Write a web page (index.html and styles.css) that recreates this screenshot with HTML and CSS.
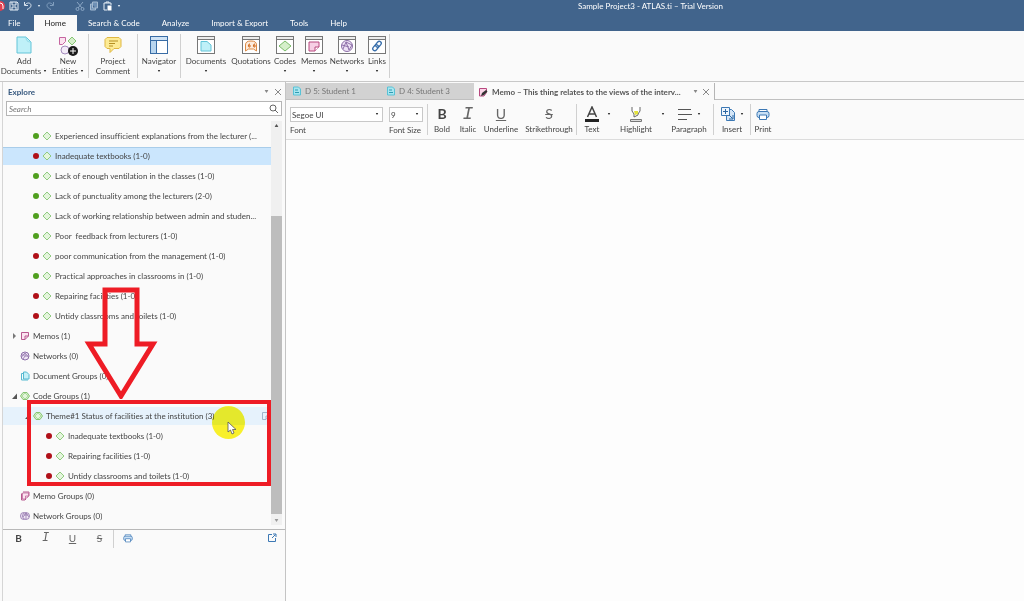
FILE: index.html
```html
<!DOCTYPE html>
<html lang="en">
<head>
    <meta charset="UTF-8">
    <meta name="viewport" content="width=device-width, initial-scale=1.0">
    <title>Sample Project3 - ATLAS.ti – Trial Version</title>
    <link rel="stylesheet" href="styles.css">
</head>
<body>

<!-- Shared icons -->
<svg class="sprite" aria-hidden="true">
    <symbol id="i-caret" viewBox="0 0 4 3"><path d="M0 0h4L2 3z" fill="currentColor"/></symbol>
    <symbol id="i-close" viewBox="0 0 8 8"><path d="M1 1l6 6M7 1L1 7" stroke="#888" fill="none"/></symbol>
    <symbol id="i-code" viewBox="0 0 10 10"><path d="M5 1l4 4-4 4-4-4z" fill="#e4f5dc" stroke="#90cb80"/></symbol>
    <symbol id="i-code-group" viewBox="0 0 10 10"><path d="M3 1.500h4l2.500 3.500L7 8.500H3L.5 5z" fill="#d5efca" stroke="#86c474"/><path d="M5 2l3 3-3 3-3-3z" fill="#e4f5dc" stroke="#90cb80" stroke-width=".6"/></symbol>
    <symbol id="i-memo" viewBox="0 0 10 10"><path d="M1.500 1.500h7v3.500L5 8.500H1.500z" fill="#fbe3f0" stroke="#b8588f"/><path d="M8.500 5H5v3.500" fill="none" stroke="#b8588f"/></symbol>
    <symbol id="i-memo-group" viewBox="0 0 10 10"><path d="M3 1h6v3.500L6.500 7M1.500 2.500v6.500H5l1-1" fill="none" stroke="#b8588f"/><path d="M2.500 2h6v3L5.500 8h-3z" fill="#fbe3f0" stroke="#b8588f" stroke-width=".7"/><path d="M8.500 5h-3v3" fill="none" stroke="#b8588f" stroke-width=".7"/></symbol>
    <symbol id="i-network" viewBox="0 0 10 10"><circle cx="5" cy="5" r="4" fill="#efe6f5" stroke="#8d6fa8"/><path d="M1.500 6L5 2l3.500 4M3 8l2-3 3 0M2 4h4" fill="none" stroke="#8d6fa8" stroke-width=".8"/></symbol>
    <symbol id="i-network-group" viewBox="0 0 10 10"><ellipse cx="3.500" cy="5" rx="3" ry="3.500" fill="#efe6f5" stroke="#8d6fa8" stroke-width=".8"/><circle cx="6" cy="5" r="3.500" fill="#efe6f5" stroke="#8d6fa8" stroke-width=".8"/><path d="M3 6l3-4 3 4M4 4h4M6 2v6" fill="none" stroke="#8d6fa8" stroke-width=".7"/></symbol>
    <symbol id="i-doc-group" viewBox="0 0 10 10"><path d="M3.500 1h3L9 3.500V8H3.500z" fill="#c5f0f7" stroke="#55b9d0"/><path d="M3 2.500H1.500V9H8" fill="none" stroke="#55b9d0"/></symbol>
    <symbol id="i-doc-text" viewBox="0 0 10 10"><path d="M1.500 1h5l2 2v6h-7z" fill="#a8e6f0" stroke="#58c2d6"/><path d="M3 4h3M3 6.500h4" stroke="#2f9bb2"/></symbol>
    <symbol id="i-print" viewBox="0 0 14 14"><path d="M3 5.500V2.500h8v3" fill="#fff" stroke="#3c78b4"/><rect x="1" y="4.500" width="12" height="6" rx="2" fill="#c9e0f5" stroke="#3c78b4"/><path d="M3.500 8h7v4.500h-7z" fill="#fff" stroke="#3c78b4"/></symbol>
    <symbol id="i-window" viewBox="0 0 18 18"><rect x=".5" y=".5" width="17" height="17" fill="#fff" stroke="#777"/><path d="M1 1h16v2H1z" fill="#ececec"/><path d="M1 3.500h16" stroke="#777"/></symbol>
</svg>

<header class="app-header">
    <div class="title-bar">
        <div class="quick-access">
            <svg class="logo" viewBox="0 0 5 10"><circle cx="0" cy="5" r="5" fill="#e04050"/><path d="M-3 5a3 3 0 0 1 6 0v3M0 3a2 2 0 1 0 0 4" fill="none" stroke="#fff"/></svg>
            <svg viewBox="0 0 10 10"><path d="M1 1h7l1 1v7H1zM3 1v3h4V1M3 9V6h4v3" fill="none" stroke="#e6eef6"/></svg>
            <svg viewBox="0 0 10 10"><path d="M1.500 1v3.500H5M2 4c2-3 6-2.500 6 .5 0 2-2 3-4 4" fill="none" stroke="#d8e3ee"/></svg>
            <svg class="caret light" viewBox="0 0 4 3"><use href="#i-caret"/></svg>
            <svg viewBox="0 0 10 10"><path d="M8.500 1v3.500H5M8 4C6 1 2 1.500 2 4.500c0 2 2 3 4 4" fill="none" stroke="#7f9dbd"/></svg>
            <svg class="cut" viewBox="0 0 10 10"><path d="M2 1l5 6M8 1L3 7" stroke="#8aa6c4"/><circle cx="2.500" cy="8" r="1.500" fill="none" stroke="#8aa6c4"/><circle cx="7.500" cy="8" r="1.500" fill="none" stroke="#8aa6c4"/></svg>
            <svg viewBox="0 0 10 10"><path d="M3.500 1h5v6h-5zM3 3H1.500v6h5V7" fill="#6f90b5" stroke="#a4bad1"/></svg>
            <svg viewBox="0 0 10 10"><path d="M4 9H1V2h7v2M3 2V1h3v1" fill="none" stroke="#e6eef6"/><path d="M4.500 4.500h4v5h-4z" fill="#fff"/></svg>
            <svg class="caret light" viewBox="0 0 4 3"><use href="#i-caret"/></svg>
        </div>
        <h1>Sample Project3 - ATLAS.ti – Trial Version</h1>
    </div>
    <nav class="menu">
        <button class="menu-item file">File</button>
        <button class="menu-item active">Home</button>
        <button class="menu-item">Search &amp; Code</button>
        <button class="menu-item">Analyze</button>
        <button class="menu-item">Import &amp; Export</button>
        <button class="menu-item">Tools</button>
        <button class="menu-item">Help</button>
    </nav>
</header>

<div class="ribbon">
    <button class="tool w-48">
        <svg viewBox="0 0 18 18"><path d="M2 1h9l5 5v11H2z" fill="#bff0f8" stroke="#62c4d8"/><path d="M11 1c0 3 1 5 5 5" fill="none" stroke="#8ad8e6"/></svg>
        <span>Add<br>Documents <svg class="caret" viewBox="0 0 4 3"><use href="#i-caret"/></svg></span>
    </button>
    <button class="tool w-40">
        <svg class="wide" viewBox="0 0 20 20"><path d="M1.500 1.500h6v4l-3 3h-3z" fill="#fbe3f0" stroke="#c566a0"/><path d="M14 1l4 4-4 4-4-4z" fill="#d5efca" stroke="#86c474"/><circle cx="7" cy="14" r="4" fill="#f3ecf8" stroke="#a58bbd"/><circle cx="15" cy="15" r="5" fill="#1a1a1a"/><path d="M12 15h6M15 12v6" stroke="#fff"/></svg>
        <span>New<br>Entities <svg class="caret" viewBox="0 0 4 3"><use href="#i-caret"/></svg></span>
    </button>
    <i class="sep"></i>
    <button class="tool w-48">
        <svg viewBox="0 0 18 18"><path d="M3 1.500h12l2 2v7l-2 2h-5L6 16.500v-4H3l-2-2v-7z" fill="#fdeb95" stroke="#dfb742"/><path d="M5 5h9M5 7.500h6M5 10h4" stroke="#b58f22"/></svg>
        <span>Project<br>Comment</span>
    </button>
    <i class="sep"></i>
    <button class="tool w-42">
        <svg viewBox="0 0 18 18"><rect x=".5" y=".5" width="17" height="17" fill="#fff" stroke="#386ca5"/><path d="M1 1h16v3H1z" fill="#cfe3f5"/><path d="M1 5h5v12H1z" fill="#b9d6ef"/><path d="M0 4.500h18M6.500 5v13" stroke="#386ca5"/></svg>
        <span>Navigator</span>
        <svg class="caret" viewBox="0 0 4 3"><use href="#i-caret"/></svg>
    </button>
    <i class="sep"></i>
    <button class="tool w-50">
        <svg viewBox="0 0 18 18"><use href="#i-window"/><path d="M4 5.500h6l4 3.500v6H4z" fill="#bff0f8" stroke="#62c4d8"/></svg>
        <span>Documents</span>
        <svg class="caret" viewBox="0 0 4 3"><use href="#i-caret"/></svg>
    </button>
    <button class="tool w-40">
        <svg viewBox="0 0 18 18"><use href="#i-window"/><path d="M3.500 15V9c0-3 2-4 5.500-4s5.500 1 5.500 4v6l-3-2h-5z" fill="#fdebdc" stroke="#dc8a45"/><path d="M8 8c-2 0-2 3-1 3h1V9H6.500M13 8c-2 0-2 3-1 3h1V9h-1.500" fill="none" stroke="#cf6b1f"/></svg>
        <span>Quotations</span>
    </button>
    <button class="tool w-28">
        <svg viewBox="0 0 18 18"><use href="#i-window"/><path d="M9 5l6 5-6 5-6-5z" fill="#d5efca" stroke="#79bb68"/></svg>
        <span>Codes</span>
        <svg class="caret" viewBox="0 0 4 3"><use href="#i-caret"/></svg>
    </button>
    <button class="tool w-30">
        <svg viewBox="0 0 18 18"><use href="#i-window"/><path d="M4 6h10v5l-4 4H4z" fill="#f7cfe4" stroke="#b8487f"/><path d="M14 11h-4v4" fill="#fff" stroke="#b8487f"/></svg>
        <span>Memos</span>
        <svg class="caret" viewBox="0 0 4 3"><use href="#i-caret"/></svg>
    </button>
    <button class="tool w-36">
        <svg viewBox="0 0 18 18"><use href="#i-window"/><circle cx="9" cy="10" r="5.500" fill="#eee2f6" stroke="#8d6fa8"/><path d="M5 13l3-7 6 3M8 6l3 8 3-5M4 9l7 2" fill="none" stroke="#8d6fa8"/></svg>
        <span>Networks</span>
        <svg class="caret" viewBox="0 0 4 3"><use href="#i-caret"/></svg>
    </button>
    <button class="tool w-24">
        <svg viewBox="0 0 18 18"><use href="#i-window"/><g transform="rotate(-50 9 10)" fill="none" stroke="#3a70ac" stroke-width="1.300"><rect x="3.500" y="8" width="6.500" height="4" rx="2"/><rect x="8" y="8" width="6.500" height="4" rx="2"/></g></svg>
        <span>Links</span>
        <svg class="caret" viewBox="0 0 4 3"><use href="#i-caret"/></svg>
    </button>
    <i class="sep"></i>
</div>

<main class="workspace">
    <aside class="explorer">
        <div class="panel-head">
            <h2>Explore</h2>
            <svg class="caret muted" viewBox="0 0 4 3"><use href="#i-caret"/></svg>
            <button class="close" aria-label="Close Explore"><svg viewBox="0 0 8 8"><use href="#i-close"/></svg></button>
        </div>
        <div class="search">
            <input type="text" placeholder="Search" aria-label="Search">
            <svg viewBox="0 0 10 10"><circle cx="4" cy="4" r="3" fill="none" stroke="#666"/><path d="M6 6l3 3" stroke="#666"/></svg>
        </div>

        <div class="tree-area">
            <ul class="tree">
                <li class="code"><i class="dot green"></i><svg><use href="#i-code"/></svg><span>Experienced insufficient explanations from the lecturer (...</span></li>
                <li class="code selected"><i class="dot red"></i><svg><use href="#i-code"/></svg><span>Inadequate textbooks (1-0)</span></li>
                <li class="code"><i class="dot green"></i><svg><use href="#i-code"/></svg><span>Lack of enough ventilation in the classes (1-0)</span></li>
                <li class="code"><i class="dot green"></i><svg><use href="#i-code"/></svg><span>Lack of punctuality among the lecturers (2-0)</span></li>
                <li class="code"><i class="dot green"></i><svg><use href="#i-code"/></svg><span>Lack of working relationship between admin and studen...</span></li>
                <li class="code"><i class="dot green"></i><svg><use href="#i-code"/></svg><span>Poor&nbsp; feedback from lecturers (1-0)</span></li>
                <li class="code"><i class="dot red"></i><svg><use href="#i-code"/></svg><span>poor communication from the management (1-0)</span></li>
                <li class="code"><i class="dot green"></i><svg><use href="#i-code"/></svg><span>Practical approaches in classrooms in (1-0)</span></li>
                <li class="code"><i class="dot red"></i><svg><use href="#i-code"/></svg><span>Repairing facilities (1-0)</span></li>
                <li class="code"><i class="dot red"></i><svg><use href="#i-code"/></svg><span>Untidy classrooms and toilets (1-0)</span></li>
                <li class="branch"><i class="twist closed"></i><svg><use href="#i-memo"/></svg><span>Memos (1)</span></li>
                <li class="branch"><i class="twist"></i><svg><use href="#i-network"/></svg><span>Networks (0)</span></li>
                <li class="branch"><i class="twist"></i><svg><use href="#i-doc-group"/></svg><span>Document Groups (0)</span></li>
                <li class="branch"><i class="twist open"></i><svg><use href="#i-code-group"/></svg><span>Code Groups (1)</span></li>
                <li class="group hover"><i class="twist open"></i><svg><use href="#i-code-group"/></svg><span>Theme#1 Status of facilities at the institution (3)</span><svg class="note" viewBox="0 0 10 10"><path d="M1.500 1.500h7v3L5 8.500H1.500zM8.500 5H5v3" fill="none" stroke="#9fb4ca"/></svg></li>
                <li class="member"><i class="dot red"></i><svg><use href="#i-code"/></svg><span>Inadequate textbooks (1-0)</span></li>
                <li class="member"><i class="dot red"></i><svg><use href="#i-code"/></svg><span>Repairing facilities (1-0)</span></li>
                <li class="member"><i class="dot red"></i><svg><use href="#i-code"/></svg><span>Untidy classrooms and toilets (1-0)</span></li>
                <li class="branch"><i class="twist"></i><svg><use href="#i-memo-group"/></svg><span>Memo Groups (0)</span></li>
                <li class="branch"><i class="twist"></i><svg><use href="#i-network-group"/></svg><span>Network Groups (0)</span></li>
            </ul>
            <div class="scrollbar">
                <svg class="up" viewBox="0 0 4 3"><use href="#i-caret"/></svg>
                <div class="track"><div class="thumb"></div></div>
                <svg class="down" viewBox="0 0 4 3"><use href="#i-caret"/></svg>
            </div>

            <!-- Annotations drawn over the tree -->
            <div class="callout-box"></div>
            <svg class="callout-arrow" viewBox="0 0 74 112"><path d="M21 3h32v54h16L37 109 5 57h16z" fill="none" stroke="#ee1c25" stroke-width="5"/></svg>
            <div class="spotlight"></div>
            <svg class="pointer" viewBox="0 0 10 14"><path d="M1 1v10l2.500-2 1.500 4 2-1-1.500-3.500H9z" fill="#fff" stroke="#555" stroke-width=".8"/></svg>
        </div>

        <div class="comment-bar">
            <button aria-label="Bold"><b>B</b></button>
            <button aria-label="Italic"><em>I</em></button>
            <button aria-label="Underline"><u>U</u></button>
            <button aria-label="Strikethrough"><s>S</s></button>
            <i class="sep"></i>
            <button aria-label="Print"><svg viewBox="0 0 14 14"><use href="#i-print"/></svg></button>
            <button class="popout" aria-label="Open in window"><svg viewBox="0 0 10 10"><path d="M5 1.500H1.500v7h7V5" fill="none" stroke="#3c78b4"/><path d="M5 5l3.500-3.500M6 1h3v3" fill="none" stroke="#3c78b4"/></svg></button>
        </div>
        <div class="comment"></div>
    </aside>

    <section class="document">
        <div class="doc-tabs">
            <button class="doc-tab"><svg><use href="#i-doc-text"/></svg>D 5: Student 1</button>
            <button class="doc-tab"><svg><use href="#i-doc-text"/></svg>D 4: Student 3</button>
            <div class="doc-tab active">
                <svg viewBox="0 0 10 10"><path d="M1.500 1.500h7v4L6 9H1.500z" fill="#fbd5e8" stroke="#b8487f"/><path d="M3 9l1-3 4-3 1.500 1.500L6 8z" fill="#333"/></svg>
                <span>Memo – This thing relates to the views of the interv...</span>
                <svg class="caret muted" viewBox="0 0 4 3"><use href="#i-caret"/></svg>
                <button class="close" aria-label="Close tab"><svg viewBox="0 0 8 8"><use href="#i-close"/></svg></button>
            </div>
            <div class="tabs-rest"></div>
        </div>

        <div class="format-bar">
            <div class="field font">
                <div class="select">
                    <select id="font"><option>Segoe UI</option></select>
                    <svg class="caret" viewBox="0 0 4 3"><use href="#i-caret"/></svg>
                </div>
                <label for="font">Font</label>
            </div>
            <div class="field size">
                <div class="select">
                    <select id="font-size"><option>9</option></select>
                    <svg class="caret" viewBox="0 0 4 3"><use href="#i-caret"/></svg>
                </div>
                <label for="font-size">Font Size</label>
            </div>
            <i class="sep"></i>
            <button class="fmt w-28"><span class="glyph"><b>B</b></span>Bold</button>
            <button class="fmt w-24"><span class="glyph"><em>I</em></span>Italic</button>
            <button class="fmt w-42"><span class="glyph"><u>U</u></span>Underline</button>
            <button class="fmt w-54"><span class="glyph"><s>S</s></span>Strikethrough</button>
            <i class="sep"></i>
            <button class="fmt w-30"><span class="glyph"><svg viewBox="0 0 14 16"><path d="M2.500 11L7 1l4.500 10M4 8h6" fill="none" stroke="#444" stroke-width="1.500"/><path d="M0 13h14v3H0z" fill="#222"/></svg></span>Text</button>
            <svg class="caret side" viewBox="0 0 4 3"><use href="#i-caret"/></svg>
            <button class="fmt w-50"><span class="glyph"><svg viewBox="0 0 14 16"><path d="M3 1v4l2 3v3l4-2V8l2-3V1" fill="#fff" stroke="#666"/><path d="M5 5h4v3L6 9z" fill="#e3e23c"/><path d="M1.500 13.500h11v2h-11z" fill="#ddd" stroke="#777"/></svg></span>Highlight</button>
            <svg class="caret side" viewBox="0 0 4 3"><use href="#i-caret"/></svg>
            <button class="fmt w-48"><span class="glyph"><svg viewBox="0 0 14 16"><path d="M0 3.500h13M0 8.500h14M0 13.500h9" stroke="#555"/></svg><svg class="caret" viewBox="0 0 4 3"><use href="#i-caret"/></svg></span>Paragraph</button>
            <i class="sep"></i>
            <button class="fmt w-36"><span class="glyph"><svg viewBox="0 0 14 16"><path d="M5.500 3.500h5l3 3v8h-8z" fill="#d4e6f7" stroke="#3c78b4"/><path d="M.5 1.500h8v8h-8z" fill="#eef5fc" stroke="#3c78b4"/><path d="M2 5.500h5M4.500 3v5M8 9l3.500 3.500M12 9v4H8" fill="none" stroke="#2b67a3"/></svg><svg class="caret" viewBox="0 0 4 3"><use href="#i-caret"/></svg></span>Insert</button>
            <i class="sep"></i>
            <button class="fmt w-24"><span class="glyph"><svg viewBox="0 0 14 14"><use href="#i-print"/></svg></span>Print</button>
        </div>
        <div class="editor" contenteditable="true" role="textbox" aria-label="Memo text"></div>
    </section>
</main>

</body>
</html>
```

FILE: styles.css
```css
* {
    margin: 0;
    padding: 0;
    box-sizing: border-box;
}

body {
    font-family: Lato, "Open Sans", sans-serif;
    font-size: 8px;
    font-variant-ligatures: none;
    line-height: 10px;
    color: #444;
    background-color: #fafafa;
    display: flex;
    flex-direction: column;
    min-height: 100vh;
}

button, input, select {
    font: inherit;
    color: inherit;
    background: none;
    border: none;
}

ul {
    list-style: none;
}

svg {
    display: block;
    flex: none;
    width: 10px;
    height: 10px;
}

.sprite {
    position: absolute;
    width: 0;
    height: 0;
}

.caret {
    width: 4px;
    height: 2px;
    color: #333;
}

.caret.light {
    color: #d8e3ee;
}

.caret.muted {
    width: 5px;
    height: 3px;
    color: #888;
}

.sep {
    flex: none;
    width: 1px;
    background-color: #d0d0d0;
}

/* Header */
.app-header {
    background-color: #41648c;
    color: #fff;
}

.title-bar {
    display: flex;
    align-items: center;
    height: 12px;
}

.title-bar h1 {
    flex: 1;
    font-size: 8px;
    font-weight: 400;
    text-align: center;
}

.quick-access {
    display: flex;
    align-items: center;
    gap: 4px;
    width: 277px;
}

.quick-access .logo {
    width: 5px;
}

.quick-access .cut {
    margin-left: 16px;
}

.menu {
    display: flex;
    height: 19px;
    padding-top: 3px;
}

.menu-item {
    padding: 0 11px;
}

.menu-item.file {
    padding: 0 13px 0 8px;
}

.menu-item.active {
    color: #222;
    background-color: #fafafa;
}

/* Ribbon */
.ribbon {
    display: flex;
    height: 51px;
    padding: 3px 0;
    border-bottom: 1px solid #c8c8c8;
}

.tool {
    display: flex;
    flex-direction: column;
    align-items: center;
    padding-top: 2px;
    white-space: nowrap;
}

.tool svg {
    width: 18px;
    height: 18px;
    margin-bottom: 2px;
}

.tool .wide {
    width: 20px;
    height: 20px;
    margin-bottom: 0;
}

.tool .caret {
    width: 4px;
    height: 2px;
    margin: 4px 0 0;
}

.tool span .caret {
    display: inline-block;
    margin: 0 0 2px;
}

.w-24 { width: 24px; }
.w-28 { width: 28px; }
.w-30 { width: 30px; }
.w-36 { width: 36px; }
.w-40 { width: 40px; }
.w-42 { width: 42px; }
.w-48 { width: 48px; }
.w-50 { width: 50px; }
.w-54 { width: 54px; }

/* Main area */
.workspace {
    display: flex;
    flex: 1;
}

.explorer {
    display: flex;
    flex-direction: column;
    flex: none;
    width: 284px;
    margin-left: 2px;
    border-left: 1px solid #d5d5d5;
    border-right: 1px solid #c4c4c4;
}

.panel-head {
    display: flex;
    align-items: center;
    gap: 5px;
    height: 19px;
    padding: 0 3px 0 5px;
}

.panel-head h2 {
    flex: 1;
    font-size: 8px;
    font-weight: 700;
    color: #34567d;
}

.close svg {
    width: 8px;
    height: 8px;
}

.search {
    display: flex;
    align-items: center;
    height: 15px;
    margin: 0 3px;
    padding: 0 2px;
    background-color: #fff;
    border: 1px solid #b5b5b5;
}

.search input {
    flex: 1;
    min-width: 0;
    outline: none;
}

.search input::placeholder {
    color: #777;
    font-style: italic;
}

/* Tree */
.tree-area {
    position: relative;
    display: flex;
    height: 414px;
    padding: 5px 3px 4px 0;
    border-bottom: 1px solid #b8b8b8;
}

.tree {
    display: flex;
    flex-direction: column;
    flex: 1;
    gap: 2px;
    padding-top: 6px;
    min-width: 0;
}

.tree li {
    display: flex;
    align-items: center;
    height: 18px;
    white-space: nowrap;
}

.tree li svg {
    margin-right: 3px;
}

.tree .code {
    padding-left: 30px;
}

.tree .branch {
    padding-left: 9px;
}

.tree .group {
    padding-left: 22px;
}

.tree .member {
    padding-left: 43px;
}

.tree .selected {
    background-color: #cbe6fd;
    box-shadow: inset 0 1px #a9cdea;
}

.tree .hover {
    background-color: #e6f2fc;
}

.tree li .note {
    margin: 0 0 0 auto;
}

.dot {
    flex: none;
    width: 6px;
    height: 6px;
    margin-right: 3px;
    border-radius: 50%;
}

.green {
    background-color: #4f9f1e;
}

.red {
    background-color: #b01018;
}

.twist {
    flex: none;
    width: 5px;
    height: 6px;
    margin-right: 3px;
}

.twist.closed {
    background-color: #777;
    clip-path: polygon(20% 0, 80% 50%, 20% 100%);
}

.twist.open {
    background-color: #555;
    clip-path: polygon(100% 10%, 100% 100%, 0 100%);
}

.scrollbar {
    display: flex;
    flex-direction: column;
    align-items: center;
    width: 11px;
    padding: 3px 0;
    background-color: #f0f0f0;
}

.scrollbar svg {
    width: 5px;
    height: 3px;
    color: #555;
}

.scrollbar .up {
    transform: rotate(180deg);
}

.scrollbar .down {
    color: #999;
}

.track {
    flex: 1;
    display: flex;
    flex-direction: column;
    justify-content: flex-end;
    width: 100%;
    padding: 5px 0;
}

.thumb {
    height: 78%;
    background-color: #bdbdbd;
}

/* Annotations */
.callout-box {
    position: absolute;
    top: 284px;
    left: 24px;
    width: 244px;
    height: 86px;
    border: 4px solid #ee1c25;
}

.callout-arrow {
    position: absolute;
    top: 171px;
    left: 81px;
    width: 74px;
    height: 112px;
}

.spotlight {
    position: absolute;
    top: 290px;
    left: 209px;
    width: 33px;
    height: 33px;
    border-radius: 50%;
    background-color: #fdf52c;
    mix-blend-mode: multiply;
}

.pointer {
    position: absolute;
    top: 305px;
    left: 224px;
    width: 10px;
    height: 14px;
}

/* Comment pane */
.comment-bar {
    display: flex;
    height: 18px;
    padding: 0 3px 0 2px;
    font-size: 10px;
}

.comment-bar button {
    display: flex;
    align-items: center;
    justify-content: center;
    width: 27px;
    height: 16px;
}

.comment-bar .popout {
    width: 20px;
    margin-left: auto;
}

em {
    font-family: "Liberation Mono", monospace;
    font-size: 12px;
}

em, u, s {
    color: #666;
}

.comment {
    flex: 1;
}

/* Document area */
.document {
    display: flex;
    flex-direction: column;
    flex: 1;
    min-width: 0;
}

.doc-tabs {
    display: flex;
    height: 18px;
    padding-top: 1px;
}

.doc-tab {
    display: flex;
    align-items: center;
    gap: 3px;
    width: 94px;
    padding-left: 6px;
    color: #777;
    background-color: #d2d2d2;
    border-bottom: 1px solid #c0c0c0;
    white-space: nowrap;
}

.doc-tab.active {
    gap: 4px;
    width: auto;
    padding: 0 4px;
    font-weight: 700;
    color: #555;
    background-color: #fafafa;
    border-right: 1px solid #b5b5b5;
    border-bottom: none;
}

.doc-tab.active span {
    padding-right: 8px;
}

.tabs-rest {
    flex: 1;
    border-bottom: 1px solid #c0c0c0;
}

.format-bar {
    display: flex;
    height: 40px;
    padding: 4px;
    border-bottom: 1px solid #dcdcdc;
}

.field {
    margin: 3px 6px 0 0;
    white-space: nowrap;
}

.field.font {
    width: 93px;
}

.field.size {
    width: 34px;
    margin-right: 4px;
}

.field label {
    display: block;
    margin-top: 3px;
}

.select {
    position: relative;
    display: flex;
    height: 15px;
    background-color: #fff;
    border: 1px solid #c8c8c8;
}

.select select {
    flex: 1;
    min-width: 0;
    padding-left: 1px;
    appearance: none;
}

.select .caret {
    position: absolute;
    top: 5px;
    right: 3px;
    pointer-events: none;
}

.fmt {
    display: flex;
    flex-direction: column;
    align-items: center;
    padding-top: 2px;
    white-space: nowrap;
}

.glyph {
    display: flex;
    align-items: center;
    gap: 5px;
    height: 16px;
    margin-bottom: 2px;
    font-size: 14px;
    line-height: 16px;
}

.glyph em {
    font-size: 18px;
}

.glyph svg {
    width: 14px;
    height: 16px;
}

.glyph .caret,
.caret.side {
    width: 4px;
    height: 2px;
}

.caret.side {
    margin-top: 9px;
}

.editor {
    flex: 1;
    background-color: #fdfdfd;
    outline: none;
}
```
